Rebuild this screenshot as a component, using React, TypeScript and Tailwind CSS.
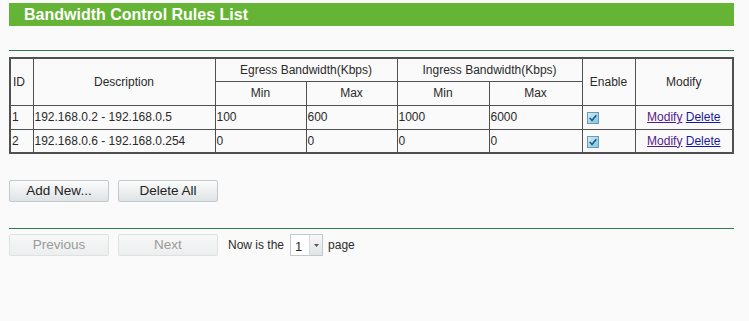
const rules = [
  { id: 1, desc: '192.168.0.2 - 192.168.0.5', eMin: '100', eMax: '600', iMin: '1000', iMax: '6000' },
  { id: 2, desc: '192.168.0.6 - 192.168.0.254', eMin: '0', eMax: '0', iMin: '0', iMax: '0' },
];

function Check() {
  return (
    <svg width="12" height="12" viewBox="0 0 12 12" className="inline-block align-middle">
      <defs>
        <linearGradient id="cb" x1="0" y1="0" x2="1" y2="1">
          <stop offset="0" stopColor="#d8eef8" />
          <stop offset="1" stopColor="#7cc4e0" />
        </linearGradient>
      </defs>
      <rect x="0.5" y="0.5" width="11" height="11" fill="url(#cb)" stroke="#6a9bb5" />
      <path d="M2.8 6 L5 8.5 L9.3 3.2" fill="none" stroke="#1f5f86" strokeWidth="1.7" />
    </svg>
  );
}

function Btn({ label, disabled }: { label: string; disabled?: boolean }) {
  return (
    <button
      className={
        disabled
          ? 'w-[100px] h-[22px] rounded-[2px] border border-[#dde1e2] bg-gradient-to-b from-[#f7f8f8] to-[#eceeef] text-[13.5px] text-[#9a9a9a]'
          : 'w-[100px] h-[22px] rounded-[2px] border border-[#c3c8cb] bg-gradient-to-b from-[#fbfbfb] to-[#dfe3e5] text-[13.5px] text-[#222]'
      }
    >
      {label}
    </button>
  );
}

export default function App() {
  const cell = 'border border-[#505050] px-[1px]';
  const head = 'border border-[#505050] font-normal';
  return (
    <div className="w-[749px] h-[321px] bg-[#fafafa] pt-[3px] pl-[9px] text-[#2a2a2a] text-[12px]" style={{ fontFamily: '"Liberation Sans", Arial, sans-serif' }}>
      <div className="w-[725px] h-[23px] bg-[#66b435] pl-[15px] text-white font-bold text-[16px] leading-[23px]">
        Bandwidth Control Rules List
      </div>
      <div className="w-[725px] mt-[24px] border-t border-[#2f7a52]" />
      <table className="mt-[6px] w-[725px] border-collapse border-2 border-[#505050] table-fixed">
        <colgroup>
          <col className="w-[23px]" />
          <col className="w-[182px]" />
          <col className="w-[91px]" />
          <col className="w-[91px]" />
          <col className="w-[92px]" />
          <col className="w-[93px]" />
          <col className="w-[53px]" />
          <col />
        </colgroup>
        <thead>
          <tr className="h-[23px]">
            <th rowSpan={2} className={head + ' text-left pl-[2px]'}>ID</th>
            <th rowSpan={2} className={head + ' text-center'}>Description</th>
            <th colSpan={2} className={head + ' text-center'}>Egress Bandwidth(Kbps)</th>
            <th colSpan={2} className={head + ' text-center'}>Ingress Bandwidth(Kbps)</th>
            <th rowSpan={2} className={head + ' text-center'}>Enable</th>
            <th rowSpan={2} className={head + ' text-center'}>Modify</th>
          </tr>
          <tr className="h-[24px]">
            <th className={head + ' text-center'}>Min</th>
            <th className={head + ' text-center'}>Max</th>
            <th className={head + ' text-center'}>Min</th>
            <th className={head + ' text-center'}>Max</th>
          </tr>
        </thead>
        <tbody>
          {rules.map((r) => (
            <tr key={r.id} className="h-[24px]">
              <td className={cell + ' text-left'}>{r.id}</td>
              <td className={cell + ' text-left'}>{r.desc}</td>
              <td className={cell + ' text-left'}>{r.eMin}</td>
              <td className={cell + ' text-left'}>{r.eMax}</td>
              <td className={cell + ' text-left'}>{r.iMin}</td>
              <td className={cell + ' text-left'}>{r.iMax}</td>
              <td className={cell + ' text-left pl-[4px]'}><Check /></td>
              <td className={cell + ' text-center'}>
                <span className="underline text-[#551a8b]">Modify</span>{' '}
                <span className="underline text-[#1a1a99]">Delete</span>
              </td>
            </tr>
          ))}
        </tbody>
      </table>
      <div className="flex gap-[9px] mt-[26px]">
        <Btn label="Add New..." />
        <Btn label="Delete All" />
      </div>
      <div className="w-[725px] mt-[26px] border-t border-[#2f7a52]" />
      <div className="flex items-center mt-[5px] gap-[9px]">
        <Btn label="Previous" disabled />
        <Btn label="Next" disabled />
        <div className="flex items-center ml-px">
          <span className="text-[12px]">Now is the</span>
          <div className="ml-[6px] flex h-[22px] w-[33px] border border-[#c3c8cb] bg-white">
            <span className="flex-1 text-[13px] leading-[22px] pl-[4px] pt-[1px]">1</span>
            <span className="w-[13px] border-l border-[#d4d8da] bg-gradient-to-b from-[#f7f8f8] to-[#e1e4e6] flex items-center justify-center">
              <svg width="5" height="3" viewBox="0 0 5 3"><path d="M0 0 H5 L2.5 3 Z" fill="#555" /></svg>
            </span>
          </div>
          <span className="ml-[5px]">page</span>
        </div>
      </div>
    </div>
  );
}
